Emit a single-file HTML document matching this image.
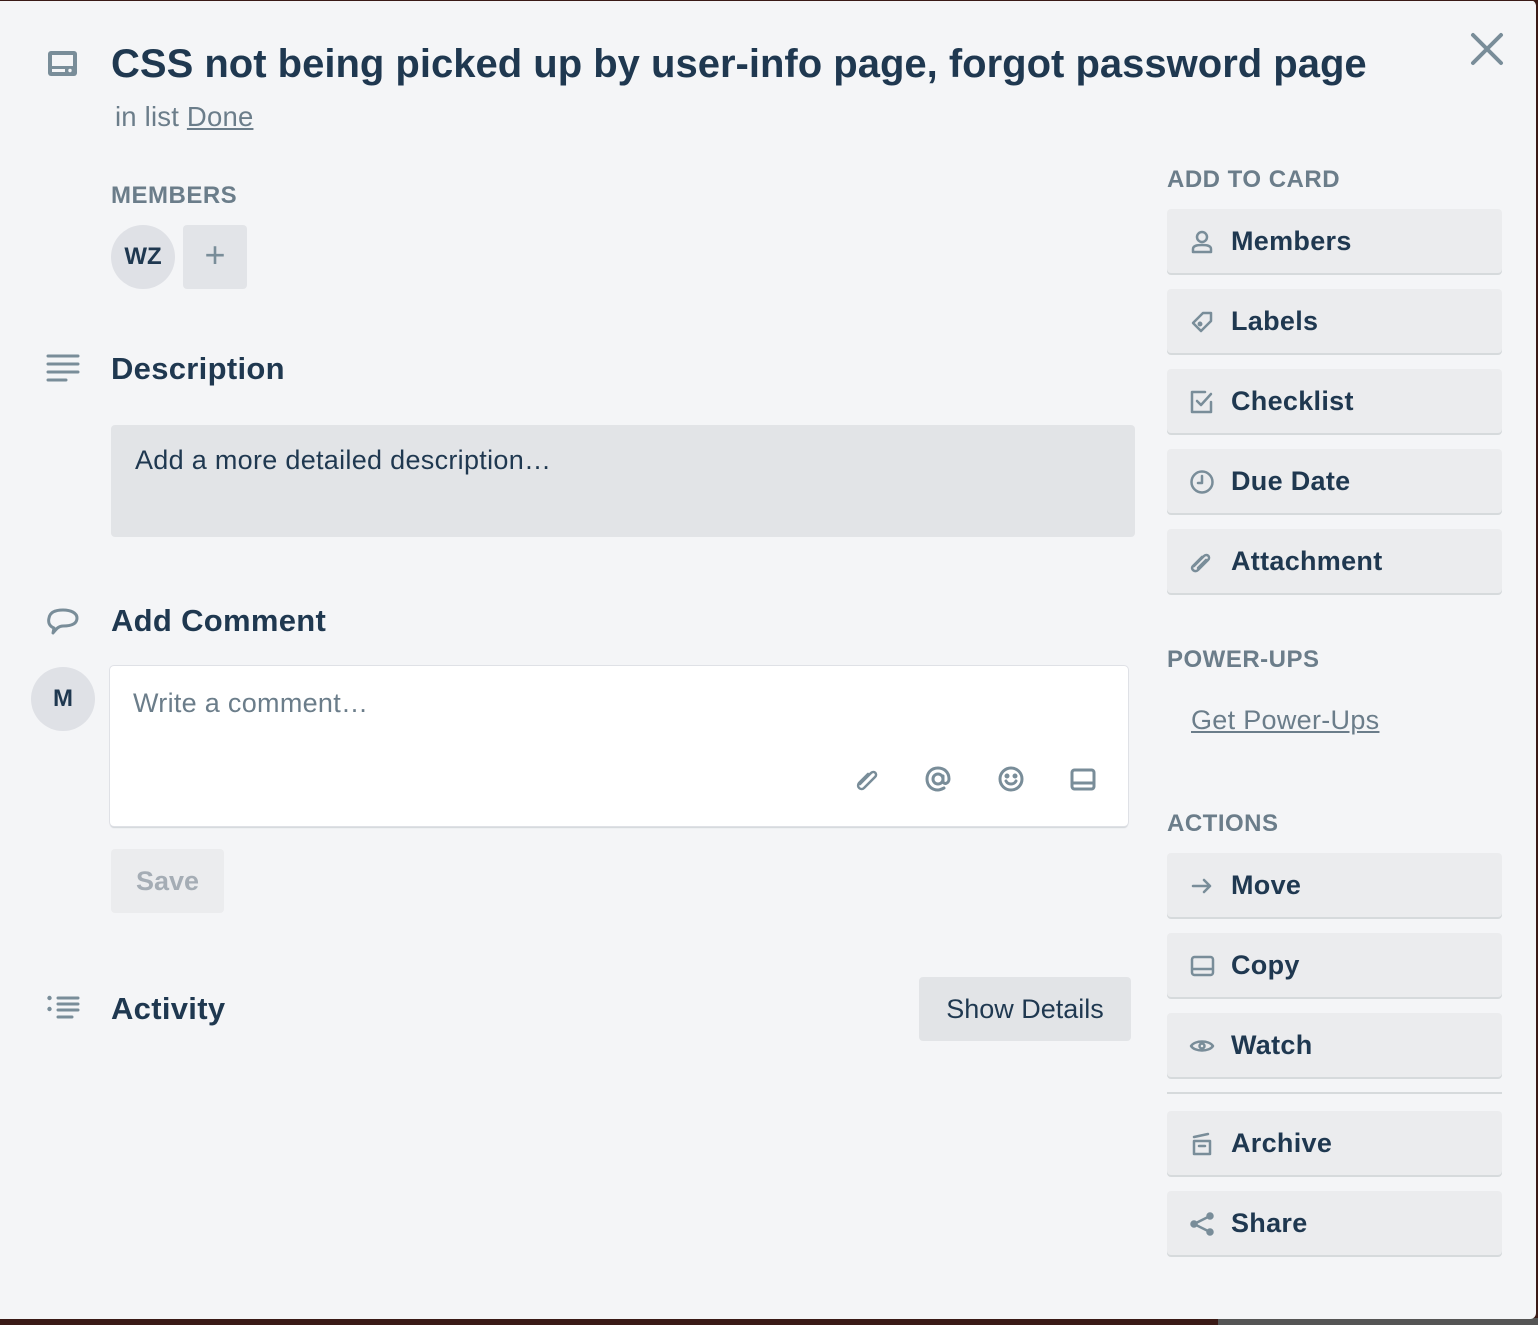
<!DOCTYPE html>
<html><head><meta charset="utf-8"><style>
*{box-sizing:border-box;margin:0;padding:0}
body{width:1538px;height:1325px;background:#3a1a16;position:relative;overflow:hidden;font-family:"Liberation Sans",Arial,sans-serif;color:#1f3850}
.bot{position:absolute;left:1218px;top:1318px;width:320px;height:7px;background:#555}
.modal{position:absolute;left:0;top:0;width:1536px;height:1319px;background:#f4f5f7;border-radius:0 6px 6px 0}
.topl{position:absolute;left:0;top:0;width:1538px;height:1px;background:#3a1a16}
.a{position:absolute}
.ico{position:absolute;fill:none;stroke:#798d99;stroke-width:3;stroke-linecap:round;stroke-linejoin:round}
h1{position:absolute;left:111px;top:42px;font-size:40px;font-weight:bold;white-space:nowrap;letter-spacing:0px}
.sub{position:absolute;left:115px;top:101px;font-size:27.5px;color:#6b7d8a;letter-spacing:0.2px}
.sub u{color:#6b7d8a}
.lbl{position:absolute;font-size:24px;font-weight:bold;color:#6b7d8a;letter-spacing:0.5px}
.h2{position:absolute;font-size:31px;font-weight:bold;letter-spacing:0.3px}
.btn{position:absolute;left:1167px;width:335px;height:64px;background:#ebecee;border-radius:4px;box-shadow:0 2px 0 #d6dadc;font-size:27px;font-weight:bold;line-height:64px;padding-left:64px;letter-spacing:0.3px}
.btn svg{position:absolute;left:22px;top:20px;width:26px;height:26px;fill:none;stroke:#798d99;stroke-width:2.5;stroke-linecap:round;stroke-linejoin:round}
</style></head><body>
<div class="bot"></div>
<div class="modal">
<svg class="ico" style="left:46px;top:48px" width="34" height="32" viewBox="0 0 34 32"><rect x="2" y="3" width="29" height="25" rx="3" fill="#798d99" stroke="none"/><rect x="6" y="7" width="21" height="11" fill="#f4f5f7" stroke="none"/><rect x="6" y="21" width="13" height="3" fill="#f4f5f7" stroke="none"/><circle cx="24" cy="22.5" r="1.7" fill="#f4f5f7" stroke="none"/></svg>
<h1>CSS not being picked up by user-info page, forgot password page</h1>
<div class="sub">in list <u>Done</u></div>
<svg class="ico" style="left:1470px;top:32px" width="34" height="34" viewBox="0 0 34 34"><path d="M3 3L31 31M31 3L3 31" stroke-width="4"/></svg>

<div class="lbl" style="left:111px;top:182px">MEMBERS</div>
<div class="a" style="left:111px;top:225px;width:64px;height:64px;border-radius:50%;background:#dfe1e6;text-align:center;line-height:64px;font-weight:bold;font-size:24px">WZ</div>
<div class="a" style="left:183px;top:225px;width:64px;height:64px;border-radius:4px;background:#e2e4e8;text-align:center;line-height:60px;font-size:36px;color:#798d99">+</div>

<svg class="ico" style="left:46px;top:354px" width="34" height="30" viewBox="0 0 34 30"><path d="M2 2H32M2 10H32M2 18H32M2 26H20"/></svg>
<div class="h2" style="left:111px;top:351px">Description</div>
<div class="a" style="left:111px;top:425px;width:1024px;height:112px;background:#e2e4e7;border-radius:4px;padding:20px 24px;font-size:27px;letter-spacing:0.3px">Add a more detailed description…</div>

<svg class="ico" style="left:46px;top:606px" width="34" height="32" viewBox="0 0 34 32"><path d="M8 22C3 20 2 16 3 12 4 6 10 4 17 4 25 4 31 7 31 12 31 18 25 20 17 20 13 20 11 22 7 27Z"/></svg>
<div class="h2" style="left:111px;top:603px">Add Comment</div>
<div class="a" style="left:31px;top:667px;width:64px;height:64px;border-radius:50%;background:#dfe1e6;text-align:center;line-height:64px;font-weight:bold;font-size:24px">M</div>
<div class="a" style="left:110px;top:666px;width:1018px;height:160px;background:#fff;border-radius:4px;box-shadow:0 0 0 1px #dfe1e6,0 2px 1px #d0d4d8;padding:22px 23px;font-size:27px;color:#6b7d8a;letter-spacing:0.3px">Write a comment…</div>
<svg class="ico" style="left:850px;top:762px" width="260" height="34" viewBox="0 0 260 34"><path d="M10 22L21 11C24 8 28 12 25 15L14 26C11 29 6 25 9 21L18 12" stroke-width="2.5"/><circle cx="88" cy="17" r="5"/><path d="M93 14V19C93 23 99 22 99 17 99 10 94 6 88 6 81 6 77 11 77 17 77 24 82 28 88 28 90 28 92 27 94 26"/><circle cx="161" cy="17" r="11"/><path d="M156 19C158 23 164 23 166 19"/><circle cx="157" cy="14" r="1" fill="#798d99"/><circle cx="165" cy="14" r="1" fill="#798d99"/><rect x="222" y="8" width="22" height="19" rx="2.5"/><path d="M223 21H243"/></svg>
<div class="a" style="left:111px;top:849px;width:113px;height:64px;background:#ebecee;border-radius:4px;text-align:center;line-height:64px;font-size:27px;font-weight:bold;color:#a5adb5">Save</div>

<svg class="ico" style="left:46px;top:994px" width="34" height="30" viewBox="0 0 34 30"><circle cx="3.5" cy="4" r="2.2" fill="#798d99" stroke="none"/><circle cx="3.5" cy="15" r="2.2" fill="#798d99" stroke="none"/><path d="M12 4H32M12 10H32M12 16H32M12 23H26"/></svg>
<div class="h2" style="left:111px;top:991px">Activity</div>
<div class="a" style="left:919px;top:977px;width:212px;height:64px;background:#e2e4e7;border-radius:4px;text-align:center;line-height:64px;font-size:27px">Show Details</div>

<div class="lbl" style="left:1167px;top:166px">ADD TO CARD</div>
<div class="btn" style="top:209px"><svg viewBox="0 0 26 26"><circle cx="13" cy="8" r="5"/><path d="M4 23V20C4 17 7 16 13 16 19 16 22 17 22 20V23Z"/></svg>Members</div>
<div class="btn" style="top:289px"><svg viewBox="0 0 26 26"><path d="M14 4L22 4 22 12 12 22 4 14Z"/><circle cx="11" cy="15" r="1.2"/></svg>Labels</div>
<div class="btn" style="top:369px"><svg viewBox="0 0 26 26"><path d="M22 13V23H3V3H16"/><path d="M8 12L12 16 22 5"/></svg>Checklist</div>
<div class="btn" style="top:449px"><svg viewBox="0 0 26 26"><circle cx="13" cy="13" r="10.5"/><path d="M13 7V14H9"/></svg>Due Date</div>
<div class="btn" style="top:529px"><svg viewBox="0 0 26 26"><path d="M5 17L15 7C18 4 22 8 19 11L9 21C6 24 1 20 4 17L13 8M9 19L17 11"/></svg>Attachment</div>

<div class="lbl" style="left:1167px;top:646px">POWER-UPS</div>
<div class="a" style="left:1191px;top:705px;font-size:27px;color:#6b7d8a;text-decoration:underline;letter-spacing:0.3px">Get Power-Ups</div>

<div class="lbl" style="left:1167px;top:810px">ACTIONS</div>
<div class="btn" style="top:853px"><svg viewBox="0 0 26 26"><path d="M4 13H21M15 7L21 13 15 19"/></svg>Move</div>
<div class="btn" style="top:933px"><svg viewBox="0 0 26 26"><rect x="3" y="4" width="21" height="18" rx="2.5"/><path d="M4 16H23"/></svg>Copy</div>
<div class="btn" style="top:1013px"><svg viewBox="0 0 26 26"><path d="M2 13C6 7 20 7 24 13 20 19 6 19 2 13Z"/><circle cx="13" cy="13" r="2.5"/></svg>Watch</div>
<div class="a" style="left:1167px;top:1092px;width:335px;height:2px;background:#d6dadc"></div>
<div class="btn" style="top:1111px"><svg viewBox="0 0 26 26"><path d="M5 6L19 3M5 10H21V23H5Z M10 15H16"/></svg>Archive</div>
<div class="btn" style="top:1191px"><svg viewBox="0 0 26 26"><path d="M21 5L5 13 21 21"/><circle cx="21" cy="5" r="2.5" fill="#798d99"/><circle cx="5" cy="13" r="2.5" fill="#798d99"/><circle cx="21" cy="21" r="2.5" fill="#798d99"/></svg>Share</div>
</div>
<div class="topl"></div>
</body></html>
